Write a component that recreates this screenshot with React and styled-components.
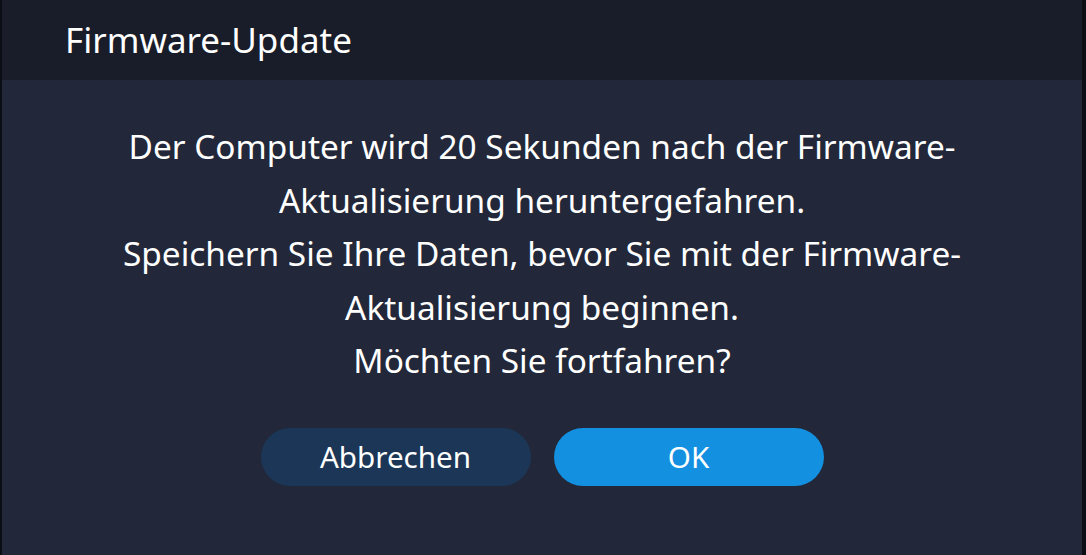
import styled, { createGlobalStyle } from 'styled-components'

const GlobalStyle = createGlobalStyle`
    html, body {
        margin: 0;
        padding: 0;
        background: #0b0e15;
    }
    body {
        font-family: "Noto Sans", "Open Sans", sans-serif;
    }
`

const Screen = styled.div`
    display: flex;
    height: 555px;
    padding: 0 4px 0 2px;
    box-sizing: border-box;
`

const Dialog = styled.div`
    flex: 1;
    display: flex;
    flex-direction: column;
    background: #222839;
`

const Header = styled.div`
    height: 80px;
    display: flex;
    align-items: center;
    padding-left: 63px;
    padding-bottom: 2px;
    box-sizing: border-box;
    background: #181d29;
    color: #ffffff;
    font-size: 35px;
`

const Body = styled.div`
    display: flex;
    flex-direction: column;
    align-items: center;
    padding-top: 40px;
`

const Message = styled.p`
    margin: 0;
    color: #ffffff;
    font-size: 33.4px;
    line-height: 53.5px;
    text-align: center;
`

const Actions = styled.div`
    display: flex;
    gap: 23px;
    margin-top: 40px;
`

const Button = styled.button`
    width: 270px;
    height: 58px;
    border: none;
    border-radius: 29px;
    font-family: inherit;
    font-size: 29.6px;
    color: #ffffff;
    background: ${p => (p.$primary ? '#1490e0' : '#1b3656')};
    padding: 0;
`

export default function App() {
    return (
        <>
            <GlobalStyle />
            <Screen>
                <Dialog>
                    <Header>Firmware-Update</Header>
                    <Body>
                        <Message>
                            Der Computer wird 20 Sekunden nach der Firmware-<br />
                            Aktualisierung heruntergefahren.<br />
                            Speichern Sie Ihre Daten, bevor Sie mit der Firmware-<br />
                            Aktualisierung beginnen.<br />
                            Möchten Sie fortfahren?
                        </Message>
                        <Actions>
                            <Button>Abbrechen</Button>
                            <Button $primary>OK</Button>
                        </Actions>
                    </Body>
                </Dialog>
            </Screen>
        </>
    )
}
